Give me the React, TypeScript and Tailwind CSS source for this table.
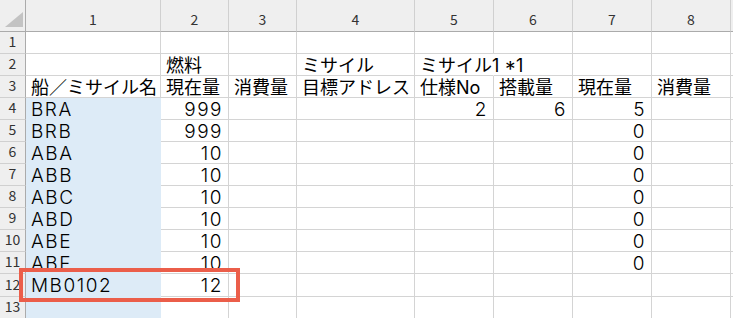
import type { ReactNode } from 'react'

type Val = string | number | null

// sheet contents, rows 1..13, columns 1..8
const sheet: Val[][] = [
  [null, null, null, null, null, null, null, null],
  [null, '燃料', null, 'ミサイル', 'ミサイル1 *1', null, null, null],
  ['船／ミサイル名', '現在量', '消費量', '目標アドレス', '仕様No', '搭載量', '現在量', '消費量'],
  ['BRA', 999, null, null, 2, 6, 5, null],
  ['BRB', 999, null, null, null, null, 0, null],
  ['ABA', 10, null, null, null, null, 0, null],
  ['ABB', 10, null, null, null, null, 0, null],
  ['ABC', 10, null, null, null, null, 0, null],
  ['ABD', 10, null, null, null, null, 0, null],
  ['ABE', 10, null, null, null, null, 0, null],
  ['ABF', 10, null, null, null, null, 0, null],
  ['MB0102', 12, null, null, null, null, null, null],
  [null, null, null, null, null, null, null, null],
]

const uiFont = "font-['Noto_Sans_CJK_JP','Noto_Sans',sans-serif]"
const cellFont = "font-['Inter','Noto_Sans_CJK_JP',sans-serif]"

function HeaderCell({ children, last }: { children?: ReactNode; last?: boolean }) {
  return (
    <div className={`h-8 bg-[#efefef] border-b border-[#ababab] ${last ? '' : 'border-r border-r-[#d0d0d0]'} flex items-center justify-center pt-2 text-[14px] text-[#333]`}>
      {children}
    </div>
  )
}

function Corner() {
  return (
    <div className="h-8 bg-[#efefef] border-b border-r border-[#ababab] flex items-end justify-end pr-[2px] pb-[4px]">
      <svg width="18" height="15" viewBox="0 0 18 15">
        <polygon points="0,15 18,15 18,0" fill="#c3c3c3" />
      </svg>
    </div>
  )
}

export default function App() {
  return (
    <div className={`relative w-[733px] h-[318px] overflow-hidden bg-white text-black ${uiFont}`}>
      <div className="grid grid-cols-[26px_135px_68px_68px_118px_79px_79px_79px_79px_1fr]">
        <Corner />
        {['1', '2', '3', '4', '5', '6', '7', '8'].map(c => (
          <HeaderCell key={c}>{c}</HeaderCell>
        ))}
        <HeaderCell last />

        {sheet.map((row, r) => {
          const h = r === 11 ? 'h-[23px]' : 'h-[22px]'
          return [
            <div key={`n${r}`} className={`${h} bg-[#efefef] border-r border-b border-r-[#ababab] border-b-[#d0d0d0] flex items-center justify-center text-[14px] text-[#333] pb-[2px]`}>
              {r + 1}
            </div>,
            ...row.map((v, c) => {
              const blue = c === 0 && r >= 3
              const spill = r === 1 && c === 4
              const num = typeof v === 'number'
              const latin = v !== null && /^[\x20-\x7e]+$/.test(String(v))
              return (
                <div
                  key={`${r}-${c}`}
                  className={`${h} border-r border-b ${blue ? 'bg-[#ddebf7] border-[#ddebf7]' : 'border-[#d4d4d4]'} ${spill ? 'border-r-transparent' : ''} ${num ? 'text-right pr-[5px]' : 'pl-[5px]'} ${latin ? 'tracking-[1.5px] font-light text-[19px]' : 'text-[18px]'} ${cellFont} leading-[23px] whitespace-nowrap overflow-visible`}
                >
                  {v}
                </div>
              )
            }),
            <div key={`e${r}`} className={`${h} border-b border-[#d4d4d4]`} />,
          ]
        })}
      </div>

      {/* highlight around row 12 */}
      <div className="absolute left-[19px] top-[268px] w-[221px] h-[34px] border-4 border-[#eb5e4a]" />
    </div>
  )
}
